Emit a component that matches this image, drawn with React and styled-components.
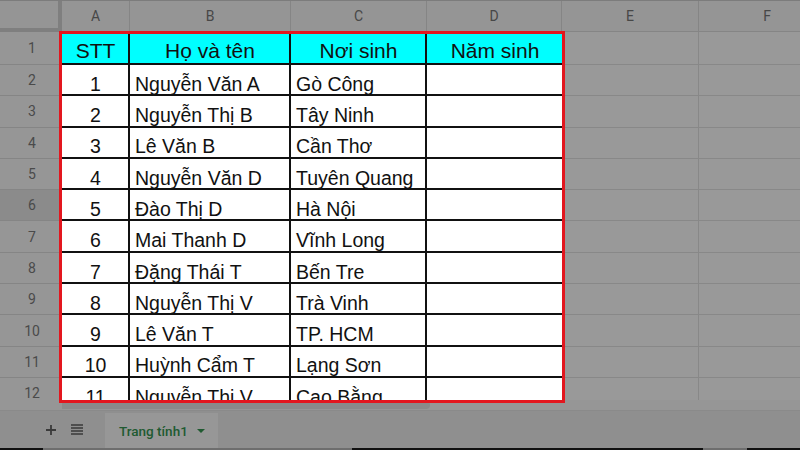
import React from 'react'
import styled, { createGlobalStyle } from 'styled-components'

const rows = [
  ['1', 'Nguyễn Văn A', 'Gò Công'],
  ['2', 'Nguyễn Thị B', 'Tây Ninh'],
  ['3', 'Lê Văn B', 'Cần Thơ'],
  ['4', 'Nguyễn Văn D', 'Tuyên Quang'],
  ['5', 'Đào Thị D', 'Hà Nội'],
  ['6', 'Mai Thanh D', 'Vĩnh Long'],
  ['7', 'Đặng Thái T', 'Bến Tre'],
  ['8', 'Nguyễn Thị V', 'Trà Vinh'],
  ['9', 'Lê Văn T', 'TP. HCM'],
  ['10', 'Huỳnh Cẩm T', 'Lạng Sơn'],
  ['11', 'Nguyễn Thị V', 'Cao Bằng'],
]

const columns = [
  { label: 'A', width: 68 },
  { label: 'B', width: 161 },
  { label: 'C', width: 136 },
  { label: 'D', width: 135 },
  { label: 'E', width: 137 },
  { label: 'F', width: 137 },
]

const HEAD_ROW = 33
const ROW = 31.3
const rowHeight = i => (i === 0 ? HEAD_ROW : ROW)

const Global = createGlobalStyle`
  html, body {
    margin: 0;
    padding: 0;
    background: #999999;
    overflow: hidden;
  }
  body {
    font-family: "Liberation Sans", Arial, "Noto Sans", sans-serif;
  }
`

const Sheet = styled.div`
  width: 800px;
  height: 450px;
  display: flex;
  flex-direction: column;
  overflow: hidden;
  border-top: 1px solid #7c7c7c;
  box-sizing: border-box;
`

const HeaderBar = styled.div`
  display: flex;
  height: 31px;
  flex: none;
  background: #959595;
  border-bottom: 1px solid #858585;
  box-sizing: border-box;
`

const Corner = styled.div`
  width: 62px;
  flex: none;
  box-sizing: border-box;
  border-right: 4px solid #7f7f7f;
  border-bottom: 4px solid #7f7f7f;
  height: 31px;
`

const ColHead = styled.div`
  width: ${p => p.$w}px;
  flex: none;
  display: flex;
  align-items: center;
  justify-content: center;
  box-sizing: border-box;
  border-right: 1px solid #858585;
  color: #474747;
  font-family: Roboto, "Liberation Sans", sans-serif;
  font-size: 14px;
`

const GridBody = styled.div`
  display: flex;
  height: 368px;
  flex: none;
`

const Stack = styled.div`
  display: flex;
  flex-direction: column;
  overflow: hidden;
  height: 100%;
  flex: ${p => (p.$fixed ? 'none' : '1 1 auto')};
`

const RowHead = styled.div`
  width: 62px;
  flex: none;
  height: ${p => p.$h}px;
  display: flex;
  align-items: center;
  justify-content: center;
  box-sizing: border-box;
  border-bottom: 1px solid #858585;
  background: ${p => (p.$hover ? '#8b8b8b' : '#969696')};
  color: #4a4a4a;
  font-family: Roboto, "Liberation Sans", sans-serif;
  font-size: 14px;
  padding-left: 2px;
`

const Table = styled.div`
  position: relative;
  width: 500px;
  flex: none;
  height: 100%;
  z-index: 1;

  &::after {
    content: '';
    position: absolute;
    top: -1px;
    left: -3px;
    right: -3px;
    bottom: -3px;
    border: 3px solid #e3161e;
    pointer-events: none;
  }
`

const TableRows = styled.div`
  height: 100%;
  overflow: hidden;
  display: flex;
  flex-direction: column;
`

const TableRow = styled.div`
  display: flex;
  flex: none;
  height: ${p => p.$h}px;
`

const Cell = styled.div`
  width: ${p => p.$w}px;
  flex: none;
  box-sizing: border-box;
  border-right: 2px solid #111;
  border-bottom: 2px solid #111;
  background: ${p => (p.$head ? '#00ffff' : '#ffffff')};
  color: #111;
  font-size: ${p => (p.$head ? 21 : 19.5)}px;
  line-height: 1;
  display: flex;
  align-items: flex-end;
  justify-content: ${p => (p.$center ? 'center' : 'flex-start')};
  padding: 0 4px ${p => (p.$head ? 2 : 0)}px 5px;
  white-space: nowrap;
  overflow: hidden;

  &:last-child {
    border-right: none;
  }
`

const EmptyRow = styled.div`
  display: flex;
  flex: none;
  height: ${p => p.$h}px;
`

const EmptyCell = styled.div`
  width: ${p => p.$w}px;
  flex: none;
  box-sizing: border-box;
  border-right: 1px solid #888888;
  border-bottom: 1px solid #888888;
`

const ScrollStrip = styled.div`
  height: 10px;
  flex: none;
  background: #969696;
  display: flex;
  align-items: center;
  padding-left: 62px;
`

const Thumb = styled.div`
  width: 368px;
  height: 8px;
  background: #8a8a8a;
  border-radius: 0 4px 4px 0;
`

const TabBar = styled.div`
  height: 37px;
  flex: none;
  background: #8f8f8f;
  display: flex;
  align-items: stretch;
  padding-left: 38px;
  border-top: 1px solid #8a8a8a;
`

const IconButton = styled.div`
  width: 26px;
  display: flex;
  align-items: center;
  justify-content: center;
  color: #3c3c3c;
`

const Tab = styled.div`
  margin-left: 15px;
  width: 113px;
  background: #979797;
  display: flex;
  align-items: center;
  gap: 9px;
  padding-left: 14px;
  box-sizing: border-box;
  color: #205a31;
  font-family: Roboto, "Liberation Sans", sans-serif;
  font-size: 13.5px;
  font-weight: 500;
  margin-top: 2px;
`

const Caret = styled.span`
  width: 0;
  height: 0;
  border-left: 4px solid transparent;
  border-right: 4px solid transparent;
  border-top: 4px solid #205a31;
  margin-top: 1px;
`

const BottomEdge = styled.div`
  height: 2px;
  flex: none;
  display: flex;
`

const EdgePart = styled.div`
  width: ${p => p.$w}px;
  background: ${p => (p.$light ? '#6e6e6e' : '#111')};
`

const PlusIcon = () => (
  <svg width="12" height="12" viewBox="0 0 12 12">
    <path d="M6 1v10M1 6h10" stroke="#3a3a3a" strokeWidth="1.8" />
  </svg>
)

const ListIcon = () => (
  <svg width="12" height="11" viewBox="0 0 12 11">
    <path d="M0 1h12M0 4h12M0 7h12M0 10h12" stroke="#3a3a3a" strokeWidth="1.4" />
  </svg>
)

export default function App() {
  const tableCols = columns.slice(0, 4)
  const restCols = columns.slice(4)
  const allRows = [['STT', 'Họ và tên', 'Nơi sinh', 'Năm sinh'], ...rows.map(r => [...r, ''])]

  return (
    <>
      <Global />
      <Sheet>
        <HeaderBar>
          <Corner />
          {columns.map(c => (
            <ColHead key={c.label} $w={c.width}>
              {c.label}
            </ColHead>
          ))}
        </HeaderBar>
        <GridBody>
          <Stack $fixed>
            {allRows.map((_, i) => (
              <RowHead key={i} $h={rowHeight(i)} $hover={i === 5}>
                {i + 1}
              </RowHead>
            ))}
          </Stack>
          <Table>
            <TableRows>
              {allRows.map((r, i) => (
                <TableRow key={i} $h={rowHeight(i)}>
                  {r.map((text, j) => (
                    <Cell
                      key={j}
                      $w={tableCols[j].width}
                      $head={i === 0}
                      $center={i === 0 || j === 0}
                    >
                      {text}
                    </Cell>
                  ))}
                </TableRow>
              ))}
            </TableRows>
          </Table>
          <Stack>
            {allRows.map((_, i) => (
              <EmptyRow key={i} $h={rowHeight(i)}>
                {restCols.map(c => (
                  <EmptyCell key={c.label} $w={c.width} />
                ))}
              </EmptyRow>
            ))}
          </Stack>
        </GridBody>
        <ScrollStrip>
          <Thumb />
        </ScrollStrip>
        <TabBar>
          <IconButton>
            <PlusIcon />
          </IconButton>
          <IconButton>
            <ListIcon />
          </IconButton>
          <Tab>
            Trang tính1
            <Caret />
          </Tab>
        </TabBar>
        <BottomEdge>
          <EdgePart $w={43} />
          <EdgePart $w={309} $light />
          <EdgePart $w={351} />
          <EdgePart $w={44} $light />
          <EdgePart $w={53} />
        </BottomEdge>
      </Sheet>
    </>
  )
}
